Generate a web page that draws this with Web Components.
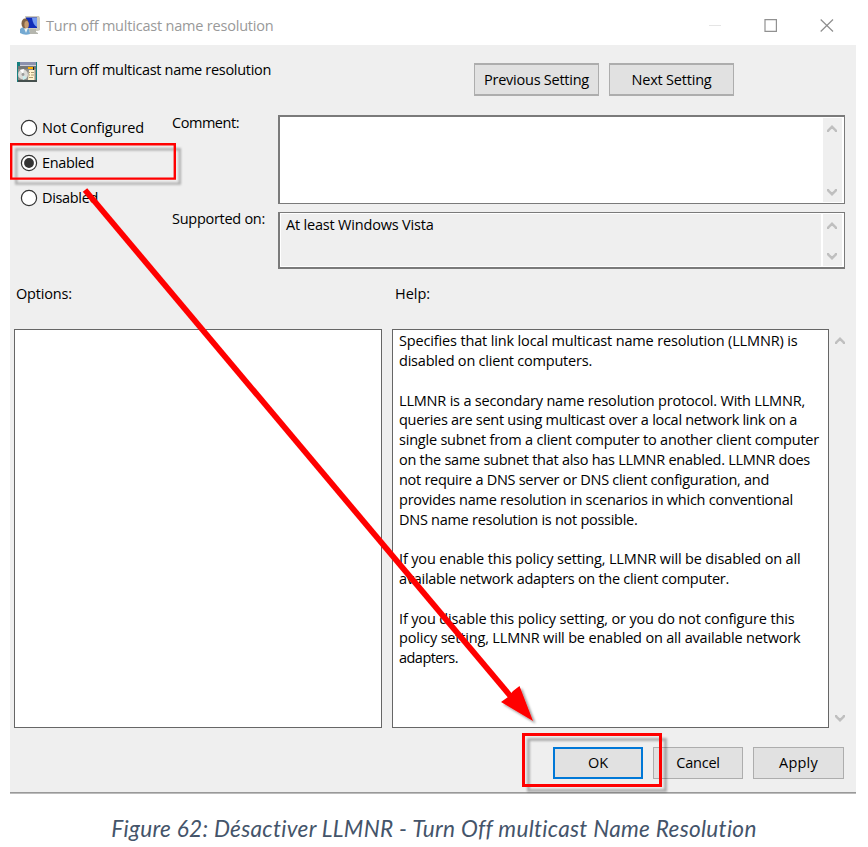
<!DOCTYPE html>
<html lang="en">
<head>
<meta charset="utf-8">
<title>Turn off multicast name resolution</title>
<style>
html,body{margin:0;background:#fff}
body{width:868px;height:847px;overflow:hidden;position:relative;font:14.5px/20px "Open Sans","Noto Sans",sans-serif;color:#000}
</style>
</head>
<body>
<policy-figure></policy-figure>
<script>
function define(name, html, ready) {
  customElements.define(name, class extends HTMLElement {
    connectedCallback() {
      if (this.shadowRoot) return;
      const t = document.createElement('template');
      t.innerHTML = html;
      this.attachShadow({mode: 'open'}).append(t.content.cloneNode(true));
      if (ready) ready.call(this, this.shadowRoot);
    }
  });
}

/* A single line of text tracked to occupy the given width. */
define('fit-text', `<style>:host{display:block;white-space:pre;width:max-content}span{display:inline-block}</style><span><slot></slot></span>`, function (root) {
  const span = root.querySelector('span');
  const target = +this.getAttribute('w');
  const natural = span.getBoundingClientRect().width;
  const n = this.textContent.length;
  span.style.letterSpacing = ((target - natural) / n) + 'px';
});

define('push-button', `<style>
:host{display:flex;box-sizing:border-box;align-items:center;justify-content:center;background:#e1e1e1;border:1px solid #adadad;height:32px;width:90px}
:host([default]){border:2px solid #0078d7}
:host([large]){width:125px;height:33px;border-width:2px 1px 2px 1px}
</style><slot></slot>`);

define('radio-option', `<style>
:host{display:flex;align-items:center;height:34.7px;gap:4px}
svg{display:block;width:18px;height:18px}
.dot{display:none}:host([checked]) .dot{display:block}
</style><svg viewBox="0 0 18 18"><circle cx="9" cy="9" r="7.6" fill="#fff" stroke="#333" stroke-width="1.2"/><circle class="dot" cx="9" cy="9" r="4.9" fill="#333"/></svg><slot></slot>`);

define('scroll-rail', `<style>
:host{display:flex;flex-direction:column;justify-content:space-between;align-items:center;box-sizing:border-box;width:19px;background:#efefef}
svg{display:block;width:10px;height:8px;fill:none;stroke:#bfbfbf;stroke-width:2.4}
</style><svg viewBox="0 0 10 8"><path d="M1 7V5.7L5 1.8L9 5.7V7"/></svg><svg viewBox="0 0 10 8"><path d="M1 1V2.3L5 6.2L9 2.3V1"/></svg>`);

define('text-field', `<style>
:host{display:flex;box-sizing:border-box;background:#fff;border:solid #7a7a7a;border-width:2px 1px 1px 2px;height:89px}
.in{flex:1;margin:1px 2px 1px 1px;padding:1px 0 0 5px}
scroll-rail{margin:1px 2px 1px 0;padding:7px 1px 6px 0}
:host([disabled]){height:57px;border-width:1px 1px 2px 2px}
:host([disabled]) .in{background:#efefef}
:host([disabled]) scroll-rail{padding:8px 1px 6px 0}
</style><div class="in"><slot></slot></div><scroll-rail></scroll-rail>`);

define('title-bar', `<style>
:host{display:flex;height:45px;align-items:center;box-sizing:border-box;padding:6px 22px 0 10px;color:#999}
.app{width:20px;height:19px;margin-right:6px}
fit-text{flex:1}
.ctl{display:flex;gap:43px;align-items:center;margin-top:-1px}
svg{display:block}
</style>
<svg class="app" viewBox="0 0 20 19">
<path d="M5 0H19L20 2V14L18 15H6Z" fill="#cbc9bd"/><path d="M6 1.5H17V12H6Z" fill="#102cb8"/><path d="M12 2H17V11Q13 9 12 2Z" fill="#7198f0"/>
<path d="M10 13H16V16L18 17V18H9Z" fill="#b5b6ae"/><path d="M0 13Q4 9 9 13L10 18Q5 20 0 17Z" fill="#73a9d2"/><path d="M4 12L6 17L8 12Z" fill="#eef5f5"/>
<ellipse cx="5" cy="7.5" rx="3.5" ry="5" fill="#806347"/><ellipse cx="6.6" cy="8.7" rx="2.2" ry="3.6" fill="#c69c70"/></svg>
<fit-text w="227.5">Turn off multicast name resolution</fit-text>
<div class="ctl"><svg width="12" height="13"><path d="M0 6.5H12" stroke="#e5e5e5"/></svg>
<svg width="13" height="13"><path d="M1 .6H12.4V12.4H1Z" fill="none" stroke="#919191" stroke-width="1.2"/></svg>
<svg width="14" height="13"><path d="M.7 .5L13 12.5M13 .5L.7 12.5" stroke="#8e8e8e" stroke-width="1.2"/></svg></div>`);

define('policy-header', `<style>
:host{display:flex;height:70px;box-sizing:border-box;padding:17px 0 0 7px;align-items:flex-start}
svg{display:block;width:20px;height:20px}
.t{width:427px;margin:-2px 0 0 10px}
.b{display:flex;gap:10px;margin-top:1px}
</style>
<svg viewBox="0 0 20 20"><path d="M0 0H20V20H0Z" fill="#168080"/><path d="M3 0H19V3H3Z" fill="#8c91ae"/><path d="M3 3H19V4H3Z" fill="#cfd0dc"/><path d="M1 4H19V7H1Z" fill="#777"/><path d="M1 7H19V18H1Z" fill="#8f8e8a"/>
<circle cx="6" cy="12.5" r="4.9" fill="#dcdcd8"/><path d="M6 12L3 8L7 7Z" fill="#fff"/><path d="M6 13L10 16L6 18Z" fill="#c9eeee"/><circle cx="6" cy="12.5" r="1.4" fill="#999"/>
<path d="M11 5H17V7H11Z" fill="#ffb000"/><path d="M16 5H17V9H16Z" fill="#222"/><path d="M12 8H17.5V18H11Z" fill="#fff3cf"/><path d="M12 10.5H13M14 10.5H17M12 13H13M14 13H17M12 15.5H16" stroke="#ad9c72" stroke-width="1"/><path d="M1 18H20V20H1Z" fill="#45504e"/></svg>
<div class="t"><fit-text w="224">Turn off multicast name resolution</fit-text></div>
<div class="b"><push-button large><fit-text w="105">Previous Setting</fit-text></push-button><push-button large><fit-text w="80">Next Setting</fit-text></push-button></div>`);

define('policy-state', `<style>
:host{display:grid;grid-template-columns:152px 106px 567px;height:154px;padding-left:10px}
.r{margin-top:-4px}
.l{display:grid;grid-template-rows:97px 57px}
.l fit-text{margin-top:-2.4px}
.l fit-text + fit-text{margin-top:-3px}
.f{display:flex;flex-direction:column;gap:8px}
</style>
<div class="r"><radio-option><fit-text w="102">Not Configured</fit-text></radio-option><radio-option checked><fit-text w="52">Enabled</fit-text></radio-option><radio-option><fit-text w="56">Disabled</fit-text></radio-option></div>
<div class="l"><fit-text w="67">Comment:</fit-text><fit-text w="93">Supported on:</fit-text></div>
<div class="f"><text-field></text-field><text-field disabled><fit-text w="147.5">At least Windows Vista</fit-text></text-field></div>`);

define('help-text', `<style>
:host{display:block;line-height:19.82px}
p{margin:0 0 19.82px}
</style>
<p><fit-text w="398.5">Specifies that link local multicast name resolution (LLMNR) is</fit-text><fit-text w="193">disabled on client computers.</fit-text></p>
<p><fit-text w="406">LLMNR is a secondary name resolution protocol. With LLMNR,</fit-text><fit-text w="398">queries are sent using multicast over a local network link on a</fit-text><fit-text w="420">single subnet from a client computer to another client computer</fit-text><fit-text w="411">on the same subnet that also has LLMNR enabled. LLMNR does</fit-text><fit-text w="370">not require a DNS server or DNS client configuration, and</fit-text><fit-text w="394">provides name resolution in scenarios in which conventional</fit-text><fit-text w="238.5">DNS name resolution is not possible.</fit-text></p>
<p><fit-text w="401.5">If you enable this policy setting, LLMNR will be disabled on all</fit-text><fit-text w="330">available network adapters on the client computer.</fit-text></p>
<p><fit-text w="395.5">If you disable this policy setting, or you do not configure this</fit-text><fit-text w="401.5">policy setting, LLMNR will be enabled on all available network</fit-text><fit-text w="59">adapters.</fit-text></p>`);

define('policy-panels', `<style>
:host{display:grid;grid-template-columns:368px 437px 22px;grid-template-rows:60px 399px;padding-left:4px}
.h{padding:15px 0 0 2px}
.h + .h{padding-left:3px}
.h + .h,.help{margin-left:0}
:host{grid-template-columns:368px 10px 437px 22px}
.h + .h,.help{grid-column:3}
.box{box-sizing:border-box;border:1px solid #666;background:#fff}
.help{padding:1.2px 0 0 6px}
scroll-rail{width:auto;padding:8px 0 6px}
</style>
<div class="h"><fit-text w="56">Options:</fit-text></div><div class="h"><fit-text w="35">Help:</fit-text></div>
<div class="box" style="grid-column:1"></div><div class="box help"><help-text></help-text></div><scroll-rail></scroll-rail>`);

define('policy-window', `<style>
:host{display:block;width:846px;margin-left:10px}
main{display:block;background:#efefef;height:747px;border-bottom:1px solid #999;box-shadow:0 1px 0 #bcbcbc}
footer{display:flex;gap:10px;justify-content:flex-end;padding:19px 12px 0 0}
</style><title-bar></title-bar><main><policy-header></policy-header><policy-state></policy-state><policy-panels></policy-panels>
<footer><push-button default><fit-text w="20">OK</fit-text></push-button><push-button><fit-text w="43.5">Cancel</fit-text></push-button><push-button style="width:91px"><fit-text w="39">Apply</fit-text></push-button></footer></main>`);

define('red-marks', `<style>:host{position:absolute;left:0;top:0;width:868px;height:847px;pointer-events:none}svg{display:block}</style>
<svg width="868" height="847"><defs><filter id="s" x="-20%" y="-40%" width="150%" height="190%"><feDropShadow dx="5" dy="5" stdDeviation="1.3" flood-color="#000" flood-opacity=".28"/></filter>
<filter id="a" x="-20%" y="-20%" width="150%" height="150%"><feDropShadow dx="2.5" dy="2.5" stdDeviation="1" flood-color="#000" flood-opacity=".4"/></filter></defs>
<g fill="none" stroke="#f00"><path filter="url(#s)" stroke-width="2.4" d="M11.2 144.2H174.8V178.6H11.2Z"/><path filter="url(#s)" stroke-width="3" d="M523.5 734.5H660.5V785.5H523.5Z"/></g>
<path d="M85 190L512 698" stroke="#f00" stroke-width="5.8"/><path filter="url(#a)" fill="#f00" d="M501 702L508 697L513 691L519.5 686L533 721Z"/></svg>`);

define('policy-figure', `<style>:host{display:block}
.c{display:flex;justify-content:center;padding-top:23px;font:italic 22.6px/26px Lato,sans-serif;color:#44546a}</style>
<policy-window></policy-window><div class="c"><fit-text w="644">Figure 62: Désactiver LLMNR - Turn Off multicast Name Resolution</fit-text></div><red-marks></red-marks>`);
</script>
</body>
</html>
